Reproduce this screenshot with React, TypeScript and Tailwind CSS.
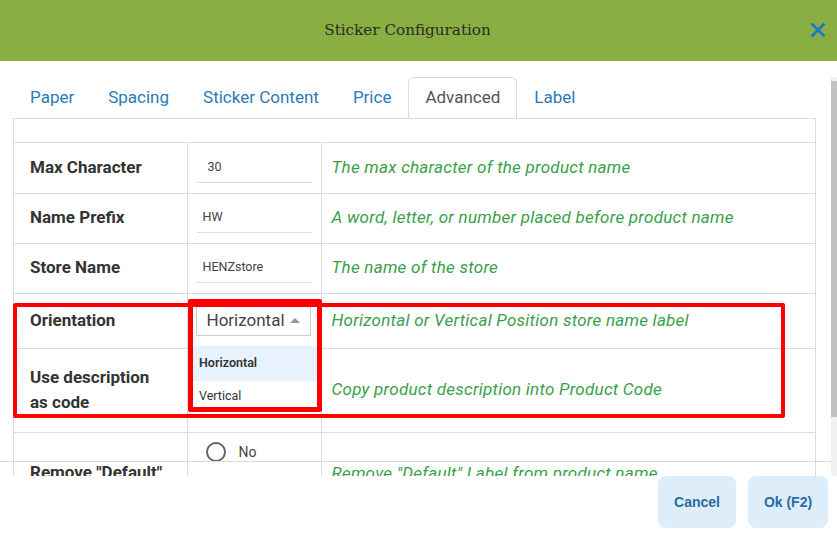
const tabs = ["Paper", "Spacing", "Sticker Content", "Price", "Advanced", "Label"];

const inputRows = [
  { label: "Max Character", value: "30", pad: "pl-[11px]", desc: "The max character of the product name" },
  { label: "Name Prefix", value: "HW", pad: "pl-[6px]", desc: "A word, letter, or number placed before product name" },
  { label: "Store Name", value: "HENZstore", pad: "pl-[6px]", desc: "The name of the store" },
];

function Radio({ label }: { label: string }) {
  return (
    <div className="flex items-center gap-[13px]">
      <span className="h-[20px] w-[20px] rounded-full border-2 border-[#666]" />
      <span className="text-[14px] text-[#444]">{label}</span>
    </div>
  );
}

export default function App() {
  return (
    <div className="relative h-[552px] w-[837px] overflow-hidden bg-white font-['Roboto',sans-serif]">
      <header className="relative flex h-[61px] items-center justify-center bg-[#89ae41] pr-[22px]">
        <h1 className="font-['DejaVu_Serif',serif] text-[15.2px] text-[#2b2b2b]">Sticker Configuration</h1>
        <button className="absolute right-[11px] top-[22px]" aria-label="Close">
          <svg width="16" height="16" viewBox="0 0 16 16">
            <path d="M1.5 1.5 14.5 14.5 M14.5 1.5 1.5 14.5" stroke="#1f78c1" strokeWidth="2.8" />
          </svg>
        </button>
      </header>

      <div className="flex h-[415px]">
        <div className="w-[831px] overflow-hidden pt-[16px]">
          <nav className="flex h-[41px] pl-[13px]">
            {tabs.map((t) => (
              <div
                key={t}
                className={
                  t === "Advanced"
                    ? "flex items-center rounded-t-[6px] border border-b-0 border-[#dcdcdc] px-[16px] text-[17px] text-[#555]"
                    : "flex items-center px-[17px] text-[17px] text-[#2a7ab8]"
                }
              >
                {t}
              </div>
            ))}
          </nav>

          <div className="mx-[13px] w-[803px] border border-b-0 border-[#dcdcdc]">
            <div className="h-[24px] border-b border-[#dcdcdc]" />
            <table className="w-full border-collapse">
              <colgroup>
                <col className="w-[173px]" />
                <col className="w-[134px]" />
                <col />
              </colgroup>
              <tbody>
                {inputRows.map((r) => (
                  <tr key={r.label} className="h-[50px] border-b border-[#dcdcdc]">
                    <td className="border-r border-[#dcdcdc] pl-[16px] text-[17px] font-bold text-[#333]">{r.label}</td>
                    <td className="border-r border-[#dcdcdc] px-[9px]">
                      <div className={`flex h-[30px] w-[115px] items-center border-b border-[#ddd] text-[12.5px] text-[#444] ${r.pad}`}>
                        {r.value}
                      </div>
                    </td>
                    <td className="pl-[10px] text-[17px] italic tracking-[0.25px] text-[#3a9f4a]">{r.desc}</td>
                  </tr>
                ))}
                <tr className="h-[55px] border-b border-[#dcdcdc]">
                  <td className="border-r border-[#dcdcdc] pl-[16px] text-[17px] font-bold text-[#333]">Orientation</td>
                  <td className="border-r border-[#dcdcdc] px-[8px]">
                    <div className="flex h-[31px] w-[115px] items-center justify-between border border-[#ccc] pl-[10px] pr-[10px] text-[17px] text-[#444]">
                      Horizontal
                      <span className="h-0 w-0 border-x-[5px] border-b-[5px] border-x-transparent border-b-[#999]" />
                    </div>
                  </td>
                  <td className="pl-[10px] text-[17px] italic tracking-[0.25px] text-[#3a9f4a]">
                    Horizontal or Vertical Position store name label
                  </td>
                </tr>
                <tr className="h-[84px] border-b border-[#dcdcdc]">
                  <td className="border-r border-[#dcdcdc] pl-[16px] text-[17px] font-bold leading-[25px] text-[#333]">
                    Use description
                    <br />
                    as code
                  </td>
                  <td className="border-r border-[#dcdcdc]" />
                  <td className="pl-[10px] text-[17px] italic tracking-[0.25px] text-[#3a9f4a]">
                    Copy product description into Product Code
                  </td>
                </tr>
                <tr className="h-[80px]">
                  <td className="border-r border-[#dcdcdc] pl-[16px] pt-[27px] align-top text-[17px] font-bold leading-[25px] text-[#333]">
                    Remove "Default"
                    <br />
                    Label
                  </td>
                  <td className="border-r border-[#dcdcdc] pl-[18px] pt-[9px] align-top">
                    <div className="flex flex-col gap-[18px]">
                      <Radio label="No" />
                      <Radio label="Yes" />
                    </div>
                  </td>
                  <td className="pl-[10px] pt-[28px] align-top text-[17px] italic leading-[25px] tracking-[0.25px] text-[#3a9f4a]">
                    Remove "Default" Label from product name
                  </td>
                </tr>
              </tbody>
            </table>
          </div>
        </div>

        <div className="mt-[16px] flex w-[6px] flex-col bg-[#f1f1f1]">
          <div className="h-[4px]" />
          <div className="h-[336px] bg-[#c1c1c1]" />
        </div>
      </div>

      <footer className="flex justify-end gap-[12px] pr-[9px]">
        <button className="h-[52px] w-[78px] rounded-[8px] bg-[#ddeefa] font-['Liberation_Sans',sans-serif] text-[14px] font-bold text-[#2a6aa3]">
          Cancel
        </button>
        <button className="h-[52px] w-[80px] rounded-[8px] bg-[#ddeefa] font-['Liberation_Sans',sans-serif] text-[14px] font-bold text-[#2a6aa3]">
          Ok (F2)
        </button>
      </footer>

      {/* line over the scroll area */}
      <div className="absolute left-0 top-[461px] h-px w-[831px] bg-[#dcdcdc]" />

      {/* open select menu */}
      <div className="absolute left-[192px] top-[338px] w-[126px] bg-white pt-[8px] text-[12.5px] text-[#333]">
        <div className="flex h-[35px] items-center bg-[#e8f2fc] pl-[7px] font-semibold">Horizontal</div>
        <div className="flex h-[30px] items-center pl-[7px]">Vertical</div>
      </div>

      {/* annotation boxes */}
      <div className="absolute left-[13px] top-[303px] h-[115px] w-[772px] rounded-[2px] border-4 border-[#f00]" />
      <div className="absolute left-[188px] top-[299px] h-[113px] w-[134px] rounded-[2px] border-[5px] border-[#f00]" />
    </div>
  );
}
